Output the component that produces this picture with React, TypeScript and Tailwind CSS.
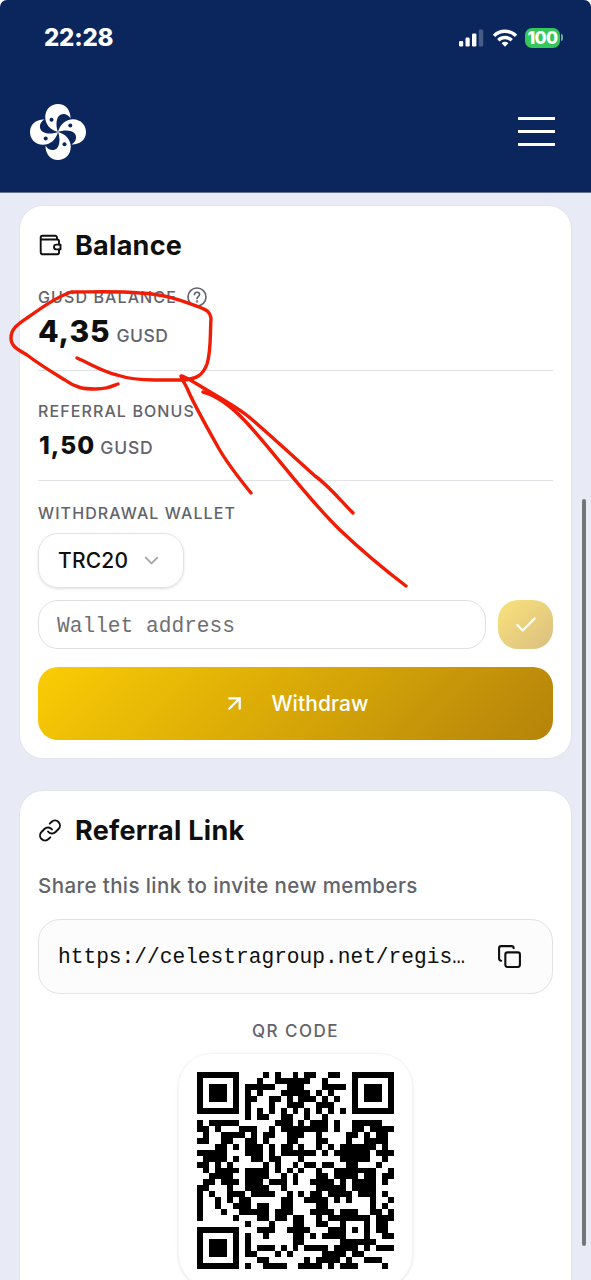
import { ArrowUpRight, Check, ChevronDown, Copy, Link } from "lucide-react";
import type { ReactNode } from "react";

// "#" = dark module, 33x33
const QR_ROWS = [
  "#######....#.#..#.##..##..#######",
  "#.....#...#..######..#....#.....#",
  "#.###.#.#####..###...####.#.###.#",
  "#.###.#.#.#...#####.#.#...#.###.#",
  "#.###.#.##..##.#.###.#.#..#.###.#",
  "#.....#.#...#..###..###...#.....#",
  "#######.#.#.#.#.#.#.#.#.#.#######",
  "........#.##..##..#..#...........",
  "#.#####......###.#.###.#..#####..",
  "##.#...###..#.########.#..##.####",
  ".#..####.#.##..###..#....##.#.##.",
  "##..##..##.#...##...##...#..####.",
  "...##.#.###.#.##.#..#.#.######.#.",
  "#####...###.#.######.#.######.###",
  ".####.#..##.##...#......#####..#.",
  "##.#.#.....#.#..#.##.##..##...#..",
  ".#.####.####.#.#.#..#..#######..#",
  "..####..####..#.#...##.####.##.##",
  ".##.###.###.###.#..####.#.####.#.",
  "##...#..####..#.....#####.####...",
  "#.#..###.####..#.#.##.####.###.#.",
  "#..#.#.##.....##..####.#.#...#..#",
  "#..#..###.##..##....##.......#.#.",
  "#...#..#####.###...####.###..##.#",
  "#.....#...##.##.##..#.#######.###",
  "........#...#...##..##..#...#.##.",
  "#######...###..####...###.#.#.##.",
  "#.....#.#..#....##.#.####...#..##",
  "#.###.#.#.......##......######...",
  "#.###.#.#.###.#.#.####.####.#.###",
  "#.###.#.##...#.#.....####.##.....",
  "#.....#...##......#.####.#..###..",
  "#######.#..####..####.#.###....#.",
];

const qrPath = QR_ROWS.map((row, y) =>
  Array.from(row)
    .map((cell, x) => (cell === "#" ? `M${x} ${y}h1v1h-1z` : ""))
    .join(""),
).join("");

function StatusBar() {
  return (
    <div className="flex h-[75px] items-center justify-between pl-[44px] pr-[28px]">
      <span className="pt-px text-[24px] font-extrabold leading-none tracking-[-0.2px]">22:28</span>
      <div className="flex items-center">
        <svg className="h-[18px] w-[25px]" viewBox="0 0 25 18" fill="#fff">
          <rect x="0" y="12" width="4.2" height="5.5" rx="1.2" />
          <rect x="6.5" y="8.5" width="4.2" height="9" rx="1.2" />
          <rect x="13" y="4.5" width="4.4" height="13" rx="1.2" />
          <rect x="19.8" y="0.5" width="4.4" height="17" rx="1.2" opacity=".25" />
        </svg>
        <svg
          className="ml-[8px] h-[18px] w-[26px]"
          viewBox="0 0 26 18"
          fill="none"
          stroke="#fff"
          strokeWidth="3.4"
        >
          <path d="M2 6.9a15.5 15.5 0 0 1 22 0" />
          <path d="M6.3 11.3a9.5 9.5 0 0 1 13.4 0" />
          <path d="M13 17.8l-3.4-3.6a4.8 4.8 0 0 1 6.8 0z" fill="#fff" stroke="none" />
        </svg>
        <span className="ml-[7px] flex h-[20px] w-[35px] items-center justify-center rounded-[7px] bg-[#34c759] text-[17.500px] font-extrabold leading-none tracking-[-0.600px]">
          100
        </span>
        <span className="ml-px h-[7px] w-[2px] rounded-r-full bg-[#5fae8a]" />
      </div>
    </div>
  );
}

function Logo() {
  return (
    <svg className="h-[58px] w-[58px]" viewBox="-29 -29 58 58">
      {[0, 90, 180, 270].map((angle) => (
        <g key={angle} transform={`rotate(${angle})`}>
          <path
            d="M0 0C-8-2-12.800-8-12.800-15C-12.500-23-7-28 0-28C7.500-28 12.800-22 12.500-13.500C10-18.500 4-19.500 .8-16C-2.200-12.500-2-5 0 0Z"
            fill="#fff"
          />
          <circle cx="-6.500" cy="-12.300" r="2" fill="#0a265c" />
        </g>
      ))}
    </svg>
  );
}

function WalletIcon() {
  return (
    <svg
      className="h-[24px] w-[24px]"
      viewBox="0 0 24 24"
      fill="none"
      stroke="currentColor"
      strokeWidth="1.9"
      strokeLinejoin="round"
      strokeLinecap="round"
    >
      <path d="M19 6.500V4.500A1.700 1.700 0 0 0 17.300 2.800H4.500a1.850 1.850 0 0 0 0 3.700H19.300A1.700 1.700 0 0 1 21 8.200V11.500M2.700 4.900V19.300a2 2 0 0 0 2 2H19.300A1.700 1.700 0 0 0 21 19.600V16.500" />
      <path d="M22.500 11.600h-4.100a2.400 2.400 0 0 0 0 4.800H22.500z" />
    </svg>
  );
}

function Card({ className, children }: { className: string; children: ReactNode }) {
  return (
    <section
      className={`mx-[19px] flex flex-col rounded-[24px] border border-[#e1e4ea] bg-white px-[18px] pt-[19px] ${className}`}
    >
      {children}
    </section>
  );
}

function CardTitle({ icon, title }: { icon: ReactNode; title: string }) {
  return (
    <div className="flex h-10 items-center gap-[13px]">
      {icon}
      <h2 className="pt-px text-[27px] font-bold leading-none tracking-[0.260px]">{title}</h2>
    </div>
  );
}

const labelClass = "font-medium leading-5 text-[#62636b]";

function BalanceCard() {
  return (
    <Card className="h-[554px]">
      <CardTitle icon={<WalletIcon />} title="Balance" />

      <div className="mt-5 flex h-6 items-center gap-[10px]">
        <span className={`text-[16px] tracking-[1.100px] ${labelClass}`}>GUSD BALANCE</span>
        <svg className="h-5 w-5" viewBox="0 0 20 20" fill="none" stroke="#62636b" strokeWidth="1.6">
          <circle cx="10" cy="10" r="9" />
          <path
            d="M7.400 7.600c.2-3.200 5.200-3 5.200 0 0 1.900-2.600 2-2.600 4"
            strokeLinecap="round"
          />
          <circle cx="10" cy="14.400" r=".4" />
        </svg>
      </div>
      <div className="mt-[2px] flex h-10 items-baseline gap-[6px]">
        <span className="text-[30px] font-extrabold leading-10 tracking-[0.900px]">4,35</span>
        <span className="text-[17.500px] font-medium tracking-[0.500px] text-[#62636b]">GUSD</span>
      </div>
      <div className="mt-[19px] h-px bg-[#e1e2e5]" />

      <span className={`mt-[30px] text-[16px] tracking-[1.100px] ${labelClass}`}>
        REFERRAL BONUS
      </span>
      <div className="mt-2 flex h-8 items-baseline gap-[5px] pl-px">
        <span className="text-[24.500px] font-extrabold leading-8 tracking-[1px]">1,50</span>
        <span className="text-[17.500px] font-medium tracking-[0.800px] text-[#62636b]">GUSD</span>
      </div>
      <div className="mt-[19px] h-px bg-[#e1e2e5]" />

      <span className={`mt-[22px] text-[16px] tracking-[1.100px] ${labelClass}`}>
        WITHDRAWAL WALLET
      </span>
      <button
        type="button"
        className="mt-[10px] flex h-[55px] w-[146px] items-center justify-between rounded-[20px] border border-[#e2e3e6] pl-[19px] pr-[20px] shadow-sm"
      >
        <span className="text-[21px] font-medium tracking-[0.200px]">TRC20</span>
        <ChevronDown className="h-[23px] w-[23px] text-[#a5a6ab]" strokeWidth={2} />
      </button>

      <div className="mt-3 flex gap-3">
        <input
          placeholder="Wallet address"
          className="h-[49px] min-w-0 flex-1 rounded-[20px] border border-[#dfe0e3] px-[18px] pt-[2px] font-['Liberation_Mono',monospace] text-[21.200px] text-black outline-none placeholder:text-[#6f6f73]"
        />
        <button
          type="button"
          className="flex h-[49px] w-[55px] items-center justify-center rounded-[20px] bg-linear-to-br from-[#fbe27a] to-[#d9bf81]"
        >
          <Check className="h-[26px] w-[26px] text-white" strokeWidth={2} />
        </button>
      </div>

      <button
        type="button"
        className="mt-[18px] flex h-[73px] items-center justify-center gap-[24px] rounded-[20px] bg-[linear-gradient(135deg,#facc04,#b5830a)] text-white"
      >
        <ArrowUpRight className="h-[25px] w-[25px]" strokeWidth={2.200} />
        <span className="text-[21px] font-medium tracking-[0.080px]">Withdraw</span>
      </button>
    </Card>
  );
}

function ReferralCard() {
  return (
    <Card className="mt-[31px] h-[560px]">
      <CardTitle
        icon={<Link className="h-[25px] w-6" strokeWidth={1.900} />}
        title="Referral Link"
      />
      <p className="mt-[21px] text-[20.500px] font-medium leading-[30px] tracking-[0.410px] text-[#62636b]">
        Share this link to invite new members
      </p>

      <div className="mt-[18px] flex h-[75px] items-center justify-between rounded-[22px] border border-[#e1e2e5] bg-[#fcfcfc] pl-[19px] pr-[30px]">
        <span className="pt-[3px] font-['Liberation_Mono',monospace] text-[21.200px]">
          https://celestragroup.net/regis…
        </span>
        <Copy className="h-[25px] w-[25px]" strokeWidth={2} />
      </div>

      <span className={`mt-[27px] text-center text-[17px] tracking-[1.500px] ${labelClass}`}>
        QR CODE
      </span>
      <div className="mt-[12px] flex h-[235px] w-[235px] justify-center self-center rounded-[34px] border border-[#f5f5f6] pt-[18px] shadow-sm">
        <svg className="h-[197px] w-[197px]" viewBox="0 0 33 33" shapeRendering="crispEdges">
          <path d={qrPath} />
        </svg>
      </div>
    </Card>
  );
}

// Hand-drawn red marks on top of the page
function Scribble() {
  return (
    <svg
      className="pointer-events-none absolute left-0 top-0 h-[640px] w-[591px]"
      viewBox="0 0 591 640"
      fill="none"
      stroke="#f01c05"
      strokeWidth="3.4"
      strokeLinecap="round"
      strokeLinejoin="round"
    >
      <path d="M77 358C91 364 101 371 117 375C129 379 139 380 155 380H183C197 379 203 375 207 364C211 352 210 337 211 318C210 311 206 310 199 307C180 300 165 294 140 293C118 291 96 292 71 292C57 297 44 306 27 318C17 325 11 329 11 338C11 347 19 350 27 355C40 365 52 372 65 380C76 388 84 389 95 389C106 389 110 387 118 384" />
      <path d="M251 493C239 478 228 465 218 447C208 429 194 405 187 388C184 382 181 378 181 376C184 376 190 380 197 384C216 396 234 405 249 417C270 435 296 459 315 476C328 485 340 500 353 513" />
      <path d="M203 392C219 396 234 409 247 423C278 457 305 496 340 530C361 550 385 570 406 586" />
    </svg>
  );
}

export default function App() {
  return (
    <div className="h-[1280px] overflow-hidden bg-white">
      <div className="relative h-[1280px] w-[591px] overflow-hidden rounded-t-[7px] bg-[#e8ebf6] font-['Inter',sans-serif] text-[#0f0f10]">
        <header className="h-[193px] border-b border-[#66738f] bg-[#0a265c] text-white">
          <StatusBar />
          <div className="flex h-[114px] items-center justify-between pl-[29px] pr-[36px]">
            <Logo />
            <div className="flex w-[37px] flex-col gap-[10px] pb-px">
              <span className="h-[3px] bg-white" />
              <span className="h-[3px] bg-white" />
              <span className="h-[3px] bg-white" />
            </div>
          </div>
        </header>

        <main className="pt-[12px]">
          <BalanceCard />
          <ReferralCard />
        </main>

        <Scribble />
        <div className="absolute right-[5px] top-[499px] h-[747px] w-[4px] rounded-full bg-[#747579]" />
      </div>
    </div>
  );
}
